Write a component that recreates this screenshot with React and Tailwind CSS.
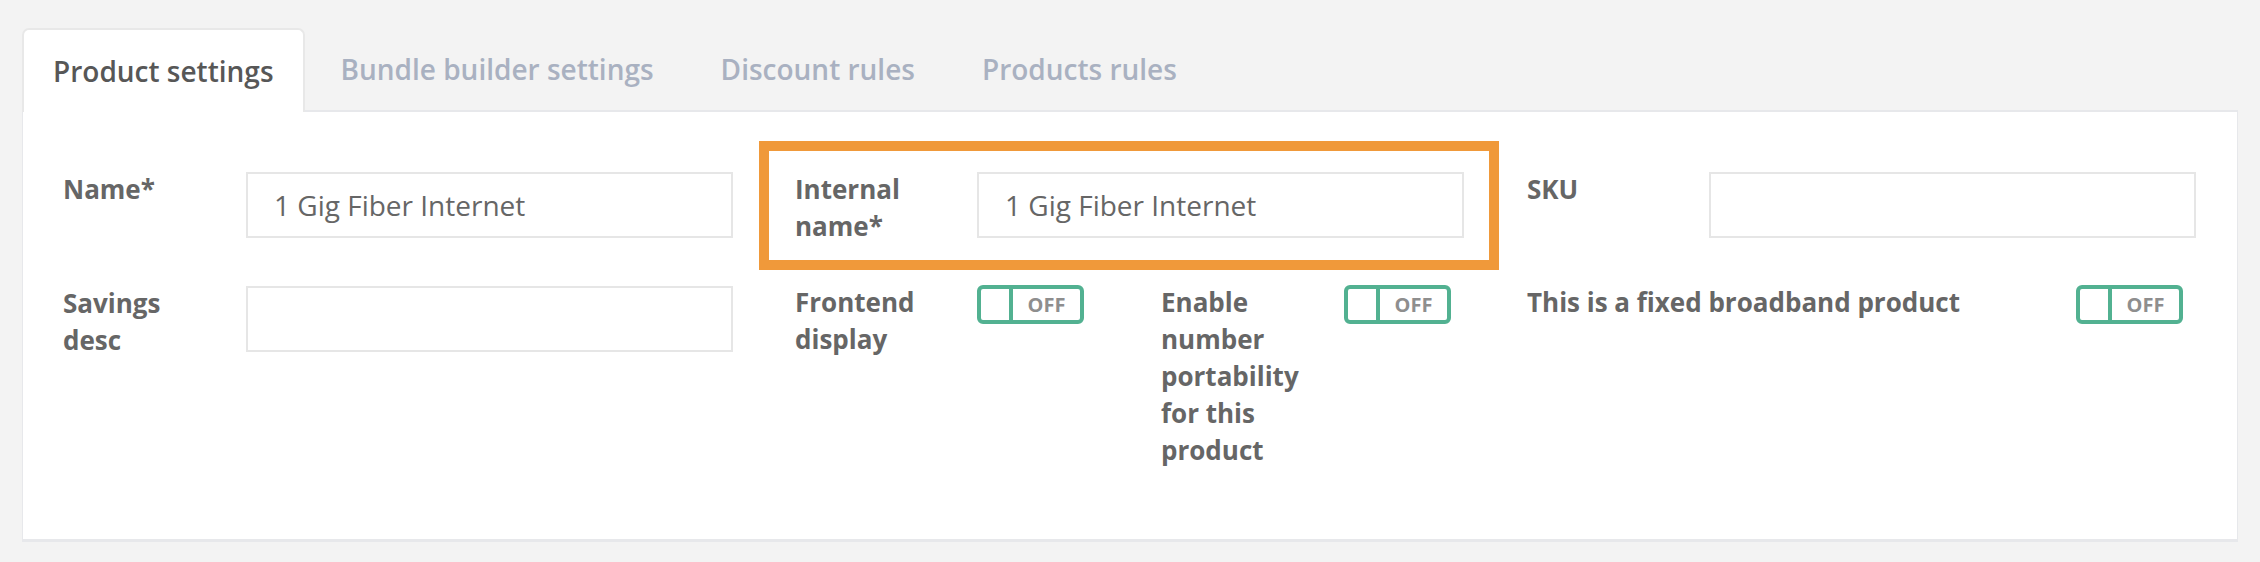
import React from 'react';

const tabs = ['Product settings', 'Bundle builder settings', 'Discount rules', 'Products rules'];

const Label = ({ children, className = '' }) => (
  <div className={`shrink-0 font-bold text-[26px] leading-[37px] text-[#666666] -mt-[1px] ${className}`}>
    {children}
  </div>
);

const TextInput = ({ value }) => (
  <input
    type="text"
    defaultValue={value}
    className="w-[487px] h-[66px] shrink-0 border-2 border-[#e6e6e6] bg-white px-[26px] text-[28px] text-[#666666] outline-none"
  />
);

const Toggle = () => (
  <div className="flex w-[107px] h-[39px] shrink-0 rounded-[6px] border-4 border-[#52b191] bg-white overflow-hidden">
    <div className="w-[32px] h-full border-r-4 border-[#52b191]" />
    <div className="flex-1 flex items-center justify-center text-[20px] font-bold text-[#8e8e8e] leading-none">
      OFF
    </div>
  </div>
);

export default function App() {
  return (
    <div
      className="min-h-[562px] bg-[#f3f3f3] pt-[28px] px-[22px]"
      style={{ fontFamily: '"Open Sans", "Noto Sans", sans-serif' }}
    >
      {/* Tabs */}
      <div className="flex items-end gap-[5px] h-[82px]">
        {tabs.map((t, i) =>
          i === 0 ? (
            <div
              key={t}
              className="relative z-10 -mb-[2px] h-[84px] px-[29px] flex items-center bg-white border-2 border-b-0 border-[#e8e8e8] rounded-t-[7px] text-[28px] font-semibold text-[#575757]"
            >
              {t}
            </div>
          ) : (
            <div
              key={t}
              className="h-[82px] px-[31px] flex items-center text-[28px] font-semibold text-[#a9b1c1]"
            >
              {t}
            </div>
          )
        )}
      </div>

      {/* Panel */}
      <div className="bg-white border-t-2 border-x border-b-[3px] border-[#e7e8eb] pt-[60px] pb-[70px] px-[40px]">
        <div className="grid grid-cols-3 gap-x-[62px] gap-y-[41px]">
          <div className="flex">
            <Label className="w-[183px]">Name*</Label>
            <TextInput value="1 Gig Fiber Internet" />
          </div>

          <div className="relative flex">
            <Label className="w-[182px]">
              Internal
              <br />
              name*
            </Label>
            <TextInput value="1 Gig Fiber Internet" />
            <div className="absolute -left-[36px] -right-[34px] -top-[31px] h-[129px] border-[10px] border-[#f0993a] pointer-events-none" />
          </div>

          <div className="flex">
            <Label className="w-[182px]">SKU</Label>
            <TextInput value="" />
          </div>

          <div className="flex">
            <Label className="w-[183px]">
              Savings
              <br />
              desc
            </Label>
            <TextInput value="" />
          </div>

          <div className="flex gap-x-[62px] -mt-[1px]">
            <div className="flex w-[304px]">
              <Label className="w-[182px]">
                Frontend
                <br />
                display
              </Label>
              <Toggle />
            </div>
            <div className="flex w-[304px]">
              <Label className="w-[183px]">
                Enable
                <br />
                number
                <br />
                portability
                <br />
                for this
                <br />
                product
              </Label>
              <Toggle />
            </div>
          </div>

          <div className="flex -mt-[1px]">
            <Label className="w-[549px]">This is a fixed broadband product</Label>
            <Toggle />
          </div>
        </div>
      </div>
    </div>
  );
}
